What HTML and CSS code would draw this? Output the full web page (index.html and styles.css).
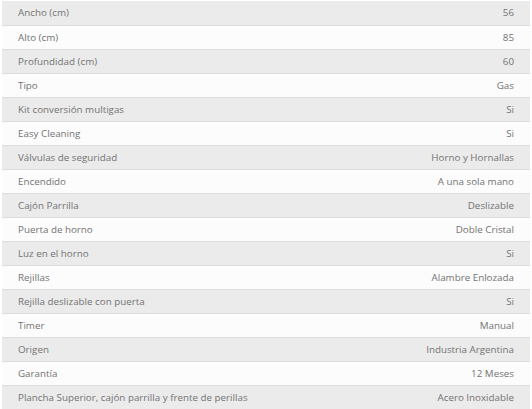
FILE: index.html
```html
<!DOCTYPE html>
<html lang="es">
<head>
<meta charset="utf-8">
<link rel="stylesheet" href="styles.css">
</head>
<body>
<table class="specs">
<tbody>
<tr><td>Ancho (cm)</td><td>56</td></tr>
<tr><td>Alto (cm)</td><td>85</td></tr>
<tr><td>Profundidad (cm)</td><td>60</td></tr>
<tr><td>Tipo</td><td>Gas</td></tr>
<tr><td>Kit conversión multigas</td><td>Si</td></tr>
<tr><td>Easy Cleaning</td><td>Si</td></tr>
<tr><td>Válvulas de seguridad</td><td>Horno y Hornallas</td></tr>
<tr><td>Encendido</td><td>A una sola mano</td></tr>
<tr><td>Cajón Parrilla</td><td>Deslizable</td></tr>
<tr><td>Puerta de horno</td><td>Doble Cristal</td></tr>
<tr><td>Luz en el horno</td><td>Si</td></tr>
<tr><td>Rejillas</td><td>Alambre Enlozada</td></tr>
<tr><td>Rejilla deslizable con puerta</td><td>Si</td></tr>
<tr><td>Timer</td><td>Manual</td></tr>
<tr><td>Origen</td><td>Industria Argentina</td></tr>
<tr><td>Garantía</td><td>12 Meses</td></tr>
<tr><td>Plancha Superior, cajón parrilla y frente de perillas</td><td>Acero Inoxidable</td></tr>
</tbody>
</table>
</body>
</html>
```
FILE: styles.css
```css
html, body {
  margin: 0;
  padding: 0;
  background: #ffffff;
}
body {
  padding: 1px 2px 0 2px;
  font-family: "Open Sans", "DejaVu Sans", sans-serif;
  font-size: 9.8px;
  color: #737373;
}
.specs {
  width: 100%;
  border-collapse: collapse;
}
.specs tr {
  height: 24px;
  background: #fcfcfc;
  border-bottom: 1px solid #dddddd;
}
.specs tr:nth-child(odd) {
  background: #ebebeb;
}
.specs tr:last-child {
  border-bottom: none;
}
.specs td {
  padding: 1px 16px 0 16px;
  height: 22px;
  line-height: 22px;
  vertical-align: middle;
  white-space: nowrap;
}
.specs td:last-child {
  text-align: right;
}
```
